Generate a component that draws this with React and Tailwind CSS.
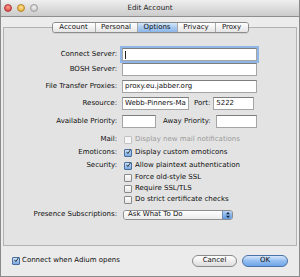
import React from "react";

function Input({ w, children, focus }) {
  return (
    <div
      className={
        "h-[13px] bg-white border border-[#a5a5a5] border-t-[#7d7d7d] flex items-center pl-[2px] text-[7px] text-[#111] whitespace-nowrap overflow-hidden " +
        w +
        (focus ? " outline outline-2 outline-[#8fb6e6]" : "")
      }
    >
      {focus && <div className="w-px h-[8px] bg-[#222]" />}
      {children}
    </div>
  );
}

function Check({ checked, disabled }) {
  return (
    <div
      className={
        "w-[8px] h-[8px] rounded-[1px] border flex items-center justify-center shrink-0 " +
        (checked
          ? "border-[#4a6e9c] bg-gradient-to-b from-[#cfe2f8] to-[#7aa9e0]"
          : disabled
          ? "border-[#c2c2c2] bg-[#f6f6f6]"
          : "border-[#8a8a8a] bg-gradient-to-b from-[#ffffff] to-[#e6e6e6]")
      }
    >
      {checked && (
        <svg width="8" height="8" viewBox="0 0 8 8" className="-mt-[2px] ml-[1px]">
          <path d="M1.2 4.2 L3 6.5 L7.2 0.6" stroke="#1d2a3a" strokeWidth="1.5" fill="none" strokeLinecap="round" strokeLinejoin="round" />
        </svg>
      )}
    </div>
  );
}

function Label({ children }) {
  return <div className="w-[115px] text-right pr-[2px] text-[7px] text-[#0e0e0e] whitespace-nowrap">{children}</div>;
}

function CheckRow({ label, text, checked, disabled, h }) {
  return (
    <div className={"flex items-center " + h}>
      <Label>{label}</Label>
      <div className="ml-[5px] flex items-center gap-[3px]">
        <Check checked={checked} disabled={disabled} />
        <span className={"text-[7px] whitespace-nowrap " + (disabled ? "text-[#9a9a9a]" : "text-[#0e0e0e]")}>{text}</span>
      </div>
    </div>
  );
}

export default function App() {
  const tabs = [
    ["Account", "w-[42px]"],
    ["Personal", "w-[42px]"],
    ["Options", "w-[40px]"],
    ["Privacy", "w-[38px]"],
    ["Proxy", "w-[33px]"],
  ];
  return (
    <div className="w-[300px] h-[277px] flex flex-col bg-[#ececec] border-x border-b border-[#8a8a8a] font-['DejaVu_Sans',sans-serif] overflow-hidden">
      {/* title bar */}
      <div className="h-[17px] shrink-0 grid grid-cols-[1fr_auto_1fr] items-center bg-gradient-to-b from-[#efefef] to-[#cbcbcb] border-b border-[#8e8e8e]">
        <div className="flex items-center gap-[5px] pl-[3px]">
          <div className="w-[8px] h-[8px] rounded-full bg-[radial-gradient(circle_at_50%_35%,#ff9c94,#d8342c)] border border-[#a83c36]" />
          <div className="w-[8px] h-[8px] rounded-full bg-[radial-gradient(circle_at_50%_35%,#ffe39a,#e3a21c)] border border-[#b58324]" />
          <div className="w-[8px] h-[8px] rounded-full bg-[radial-gradient(circle_at_50%_35%,#f2f2f2,#bdbdbd)] border border-[#9c9c9c]" />
        </div>
        <div className="text-[7.2px] text-[#262626]">Edit Account</div>
        <div />
      </div>

      {/* tabs */}
      <div className="relative z-10 mt-[5px] h-[11px] flex justify-center">
        <div className="flex h-[11px] rounded-[3px] border border-[#8c8c8c] overflow-hidden shadow-[0_1px_0_rgba(0,0,0,0.08)]">
          {tabs.map(([t, w], i) => (
            <div
              key={t}
              className={
                "h-full flex items-center justify-center text-[7px] " +
                w +
                (i > 0 ? " border-l border-[#a9a9a9]" : "") +
                (t === "Options"
                  ? " bg-gradient-to-b from-[#d4e6fa] via-[#a9c9ef] to-[#8db7ea] text-[#111]"
                  : " bg-gradient-to-b from-[#ffffff] to-[#e4e4e4] text-[#111]")
              }
            >
              {t}
            </div>
          ))}
        </div>
      </div>

      {/* tab box */}
      <div className="-mt-[6px] mx-[2px] h-[219px] shrink-0 bg-[#e3e3e3] border border-[#b2b2b2] flex flex-col pt-[20px]">
        <div className="flex items-center">
          <Label>Connect Server:</Label>
          <div className="ml-[3px]"><Input w="w-[135px]" focus /></div>
        </div>
        <div className="flex items-center mt-[2px]">
          <Label>BOSH Server:</Label>
          <div className="ml-[3px]"><Input w="w-[135px]" /></div>
        </div>
        <div className="flex items-center mt-[4px]">
          <Label>File Transfer Proxies:</Label>
          <div className="ml-[3px]"><Input w="w-[135px]">proxy.eu.jabber.org</Input></div>
        </div>
        <div className="flex items-center mt-[4px]">
          <Label>Resource:</Label>
          <div className="ml-[3px]"><Input w="w-[67px]">Webb-Pinners-Ma</Input></div>
          <div className="ml-[5px] text-[7px] text-[#0e0e0e]">Port:</div>
          <div className="ml-[3px]"><Input w="w-[41px]">5222</Input></div>
        </div>
        <div className="flex items-center mt-[5px]">
          <Label>Available Priority:</Label>
          <div className="ml-[3px]"><Input w="w-[34px]" /></div>
          <div className="ml-[7px] text-[7px] text-[#0e0e0e] w-[51px] whitespace-nowrap">Away Priority:</div>
          <div className="ml-[2px]"><Input w="w-[41px]" /></div>
        </div>
        <div className="mt-[5px]">
          <CheckRow h="h-[13px]" label="Mail:" text="Display new mail notifications" disabled />
          <CheckRow h="h-[13px]" label="Emoticons:" text="Display custom emoticons" checked />
          <CheckRow h="h-[13px]" label="Security:" text="Allow plaintext authentication" checked />
          <CheckRow h="h-[11px]" label="" text="Force old-style SSL" />
          <CheckRow h="h-[11px]" label="" text="Require SSL/TLS" />
          <CheckRow h="h-[11px]" label="" text="Do strict certificate checks" />
        </div>
        <div className="flex items-center mt-[4px] h-[11px]">
          <Label>Presence Subscriptions:</Label>
          <div className="ml-[4px] w-[110px] h-[10px] flex rounded-[3px] border border-[#8f8f8f] overflow-hidden">
            <div className="flex-1 bg-gradient-to-b from-[#ffffff] to-[#ececec] flex items-center pl-[4px] text-[7px] text-[#111]">Ask What To Do</div>
            <div className="w-[10px] bg-gradient-to-b from-[#b7d3f4] to-[#5f98de] border-l border-[#6f8fb8] flex items-center justify-center">
              <svg width="6" height="8" viewBox="0 0 6 8">
                <path d="M1 3.2 L3 1 L5 3.2 Z M1 4.8 L3 7 L5 4.8 Z" fill="#10243f" />
              </svg>
            </div>
          </div>
        </div>
      </div>

      {/* bottom */}
      <div className="flex-1 flex items-center justify-between pl-[11px] pr-[11px] pb-[1px] bg-[#ebebeb]">
        <div className="flex items-center gap-[2px]">
          <Check checked />
          <span className="text-[7px] text-[#0e0e0e]">Connect when Adium opens</span>
        </div>
        <div className="flex items-center gap-[5px]">
          <div className="w-[45px] h-[12px] rounded-full border border-[#8a8a8a] bg-gradient-to-b from-[#ffffff] to-[#dcdcdc] flex items-center justify-center text-[7px] text-[#111]">Cancel</div>
          <div className="w-[46px] h-[12px] rounded-full border border-[#4b72a6] bg-gradient-to-b from-[#d6e7fb] via-[#93bdf0] to-[#6fa5ea] flex items-center justify-center text-[7px] text-[#111]">OK</div>
        </div>
      </div>
    </div>
  );
}
